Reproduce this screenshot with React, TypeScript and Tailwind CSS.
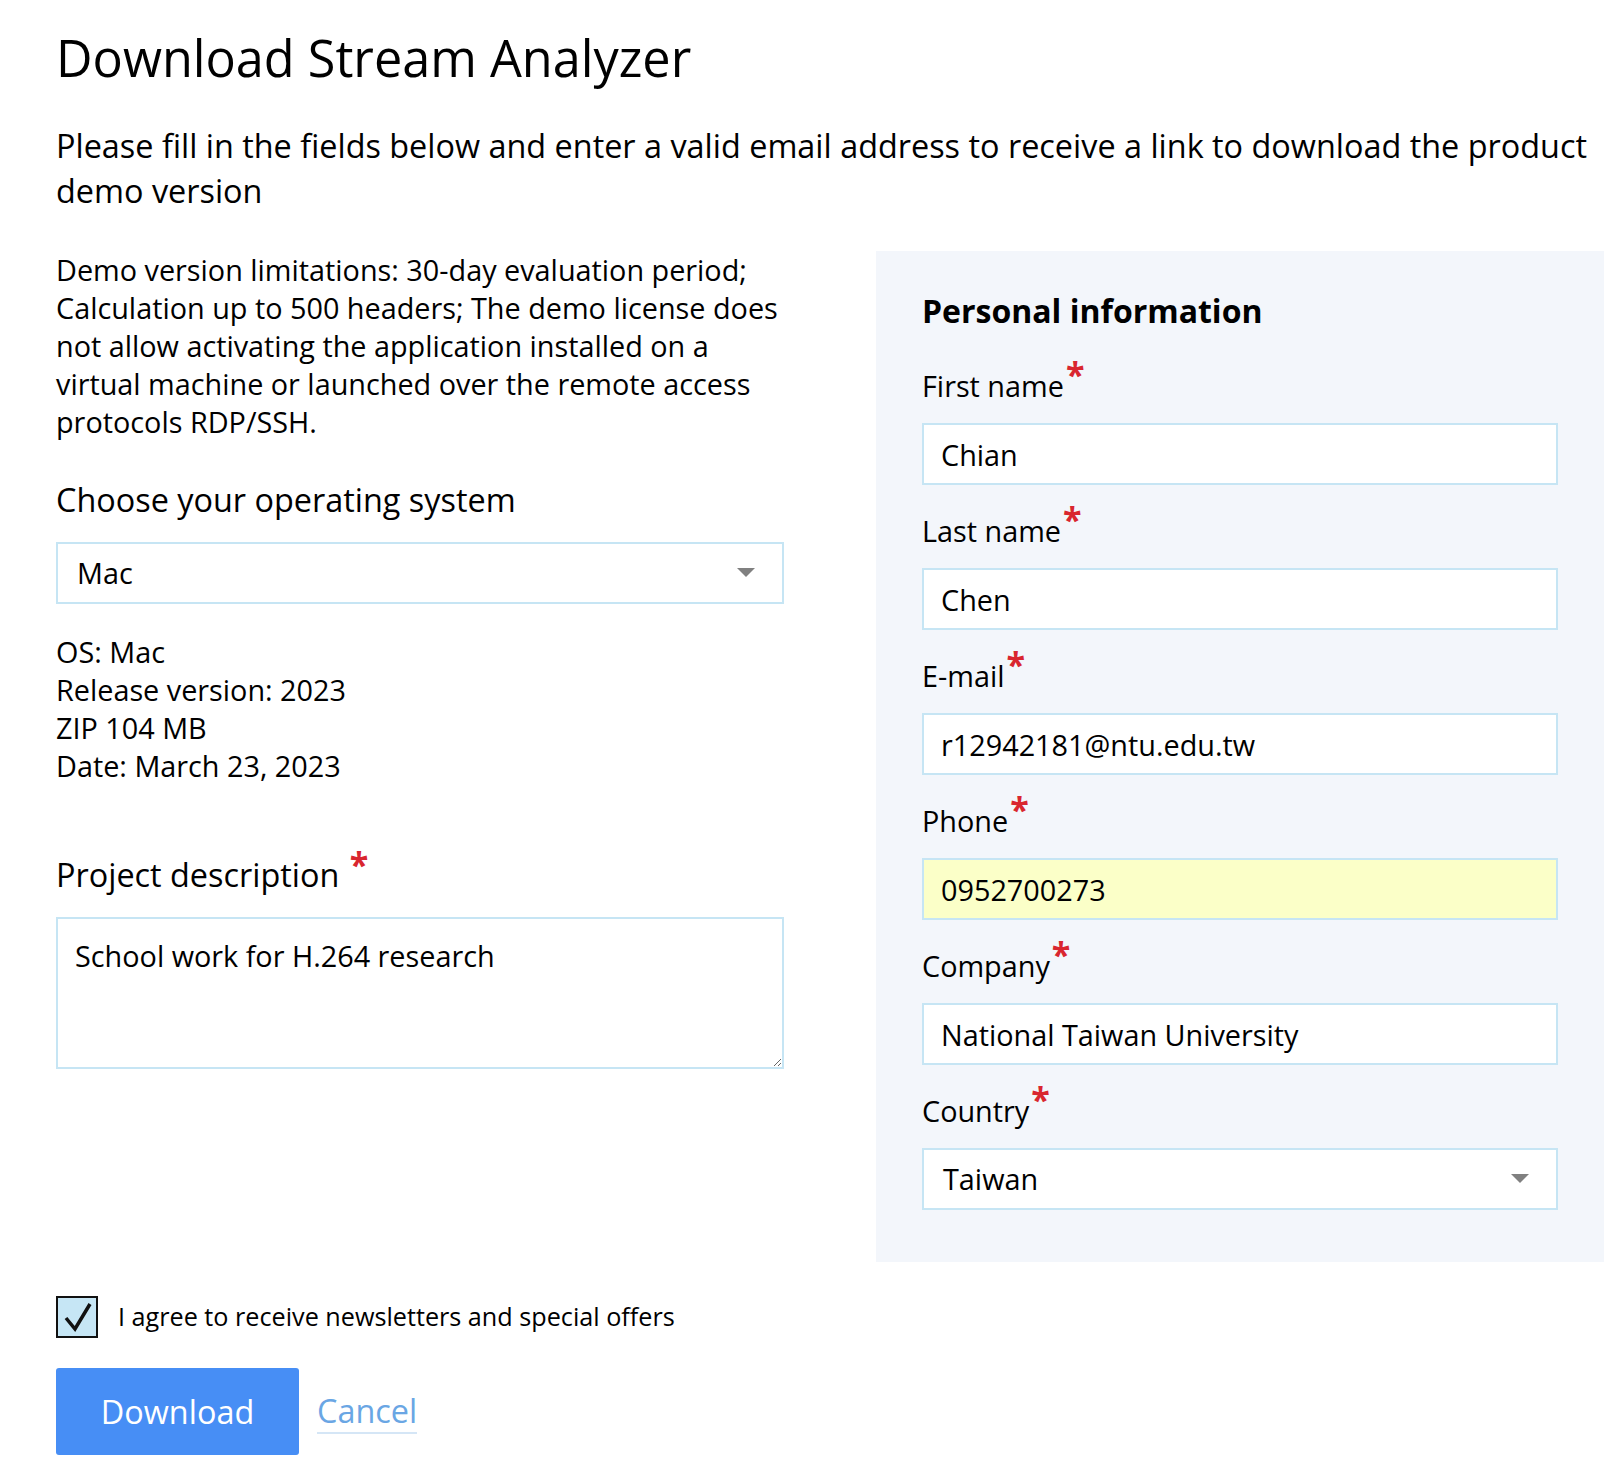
import React from 'react';

const Req = () => (
  <span className="relative -top-[10px] ml-[2px] text-[34px] leading-none font-bold text-[#d9262f]">*</span>
);

const Field: React.FC<{ label: string; value: string; highlight?: boolean; first?: boolean }> = ({
  label,
  value,
  highlight,
  first,
}) => (
  <div className={first ? 'mt-[36px]' : 'mt-[27px]'}>
    <div className="h-[36px] text-[28.8px] leading-[36px] text-black">
      {label}
      <Req />
    </div>
    <input
      readOnly
      value={value}
      className={`mt-[20px] block h-[62px] w-full border-2 border-[#c6e5f4] px-[17px] text-[28.8px] text-black outline-none ${
        highlight ? 'bg-[#fbffc8]' : 'bg-white'
      }`}
    />
  </div>
);

const Caret = () => (
  <svg width="18" height="10" viewBox="0 0 18 10" className="shrink-0">
    <path d="M0 0 L18 0 L9 9 Z" fill="#808080" />
  </svg>
);

const FakeSelect: React.FC<{ value: string }> = ({ value }) => (
  <div className="flex h-[62px] w-full items-center justify-between border-2 border-[#c6e5f4] bg-white pl-[19px] pr-[27px] text-[28.8px] text-black">
    <span>{value}</span>
    <Caret />
  </div>
);

export default function App() {
  return (
    <div className="min-h-screen bg-white pl-[56px] pt-[27px] font-['Open_Sans',sans-serif] text-black">
      <h1 className="text-[50.4px] leading-[62px] font-normal">Download Stream Analyzer</h1>
      <p className="mt-[34px] text-[32.4px] leading-[45px]">
        Please fill in the fields below and enter a valid email address to receive a link to download the product
        demo version
      </p>

      <div className="mt-[38px] grid grid-cols-[728px_728px] gap-x-[92px]">
        {/* left column */}
        <div>
          <p className="text-[28.8px] leading-[38px]">
            Demo version limitations: 30-day evaluation period; Calculation up to 500 headers; The demo license does
            not allow activating the application installed on a virtual machine or launched over the remote access
            protocols RDP/SSH.
          </p>
          <h3 className="mt-[38px] text-[32.4px] leading-[40px]">Choose your operating system</h3>
          <div className="mt-[23px]">
            <FakeSelect value="Mac" />
          </div>
          <div className="mt-[29px] text-[28.8px] leading-[38px]">
            <div>OS: Mac</div>
            <div>Release version: 2023</div>
            <div>ZIP 104 MB</div>
            <div>Date: March 23, 2023</div>
          </div>
          <h3 className="mt-[69px] text-[32.4px] leading-[40px]">
            Project description <Req />
          </h3>
          <textarea
            readOnly
            defaultValue="School work for H.264 research"
            className="mt-[23px] block h-[152px] w-full border-2 border-[#c6e5f4] bg-white px-[17px] py-[18px] text-[28.8px] leading-[38px] text-black outline-none"
          />
        </div>

        {/* right panel */}
        <div className="bg-[#f3f6fb] px-[46px] pt-[40px] pb-[52px]">
          <h2 className="text-[32px] leading-[40px] font-bold">Personal information</h2>
          <Field label="First name" value="Chian" first />
          <Field label="Last name" value="Chen" />
          <Field label="E-mail" value="r12942181@ntu.edu.tw" />
          <Field label="Phone" value="0952700273" highlight />
          <Field label="Company" value="National Taiwan University" />
          <div className="mt-[27px]">
            <div className="h-[36px] text-[28.8px] leading-[36px]">
              Country
              <Req />
            </div>
            <div className="mt-[20px]">
              <FakeSelect value="Taiwan" />
            </div>
          </div>
        </div>
      </div>

      <label className="mt-[34px] flex items-center gap-[20px]">
        <span className="flex h-[42px] w-[42px] items-center justify-center border-2 border-[#111] bg-[#c6e6f5]">
          <svg width="38" height="38" viewBox="0 0 38 38">
            <path d="M8 20 L17 31 L32 6" fill="none" stroke="#111" strokeWidth="3.5" />
          </svg>
        </span>
        <span className="text-[25.2px]">I agree to receive newsletters and special offers</span>
      </label>

      <div className="mt-[30px] flex items-center gap-[18px] pb-[22px]">
        <button className="h-[87px] w-[243px] rounded-[3px] bg-[#478ef5] text-[32.4px] text-white">Download</button>
        <a className="border-b-2 border-[#d5e6f6] pb-[2px] text-[32.4px] leading-[40px] text-[#6aa6e4]">Cancel</a>
      </div>
    </div>
  );
}
